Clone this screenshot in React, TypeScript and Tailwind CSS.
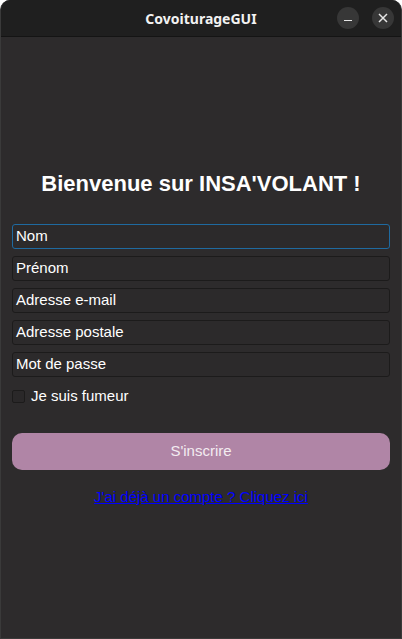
export default function App() {
  const fields = ["Prénom", "Adresse e-mail", "Adresse postale", "Mot de passe"];
  return (
    <div className="w-[402px] h-[639px] bg-[#2d2b2c] flex flex-col rounded-t-[10px] overflow-hidden border-x border-b border-[#3a3a3a] font-['Liberation_Sans',sans-serif]">
      {/* Title bar */}
      <div className="h-[37px] shrink-0 bg-[#1f1f1f] border-b border-[#141414] flex items-center relative">
        <div className="flex-1 text-center text-[14px] font-bold text-[#f2f2f2] font-['Noto_Sans',sans-serif]">
          CovoiturageGUI
        </div>
        <div className="absolute right-[7px] top-[7px] flex gap-[13px]">
          <div className="w-[22px] h-[22px] rounded-full bg-[#373737] flex items-center justify-center">
            <div className="w-[8px] h-[1.5px] bg-[#e6e6e6] mt-[5px]" />
          </div>
          <div className="w-[22px] h-[22px] rounded-full bg-[#373737] flex items-center justify-center">
            <svg width="10" height="10" viewBox="0 0 10 10">
              <path d="M1 1 L9 9 M9 1 L1 9" stroke="#e6e6e6" strokeWidth="1.5" />
            </svg>
          </div>
        </div>
      </div>

      {/* Body */}
      <div className="flex flex-col px-[11px] pt-[134px]">
        <h1 className="text-center text-[22px] font-bold text-white leading-[26px]">
          Bienvenue sur INSA'VOLANT !
        </h1>
        <div className="flex flex-col gap-[7px] mt-[27px]">
          <div className="h-[25px] rounded-[3px] border border-[#1f6aa0] bg-[#2c2a2b] flex items-center px-[3px] text-[15px] text-white">
            Nom
          </div>
          {fields.map((f) => (
            <div
              key={f}
              className="h-[25px] rounded-[3px] border border-[#1c1b1b] bg-[#2c2a2b] flex items-center px-[3px] text-[15px] text-white"
            >
              {f}
            </div>
          ))}
        </div>
        <div className="flex items-center gap-[6px] mt-[12px] h-[14px]">
          <div className="w-[13px] h-[13px] border border-[#1c1b1b] bg-[#2a2829] rounded-[2px]" />
          <span className="text-[15px] text-white">Je suis fumeur</span>
        </div>
        <button className="mt-[30px] h-[37px] w-full rounded-[10px] bg-[#b085a6] text-[15px] text-[#f3ecf1]">
          S'inscrire
        </button>
        <div className="mt-[15px] text-center">
          <a className="text-[15px] text-[#0000ff] underline">J'ai déjà un compte ? Cliquez ici</a>
        </div>
      </div>
    </div>
  );
}
